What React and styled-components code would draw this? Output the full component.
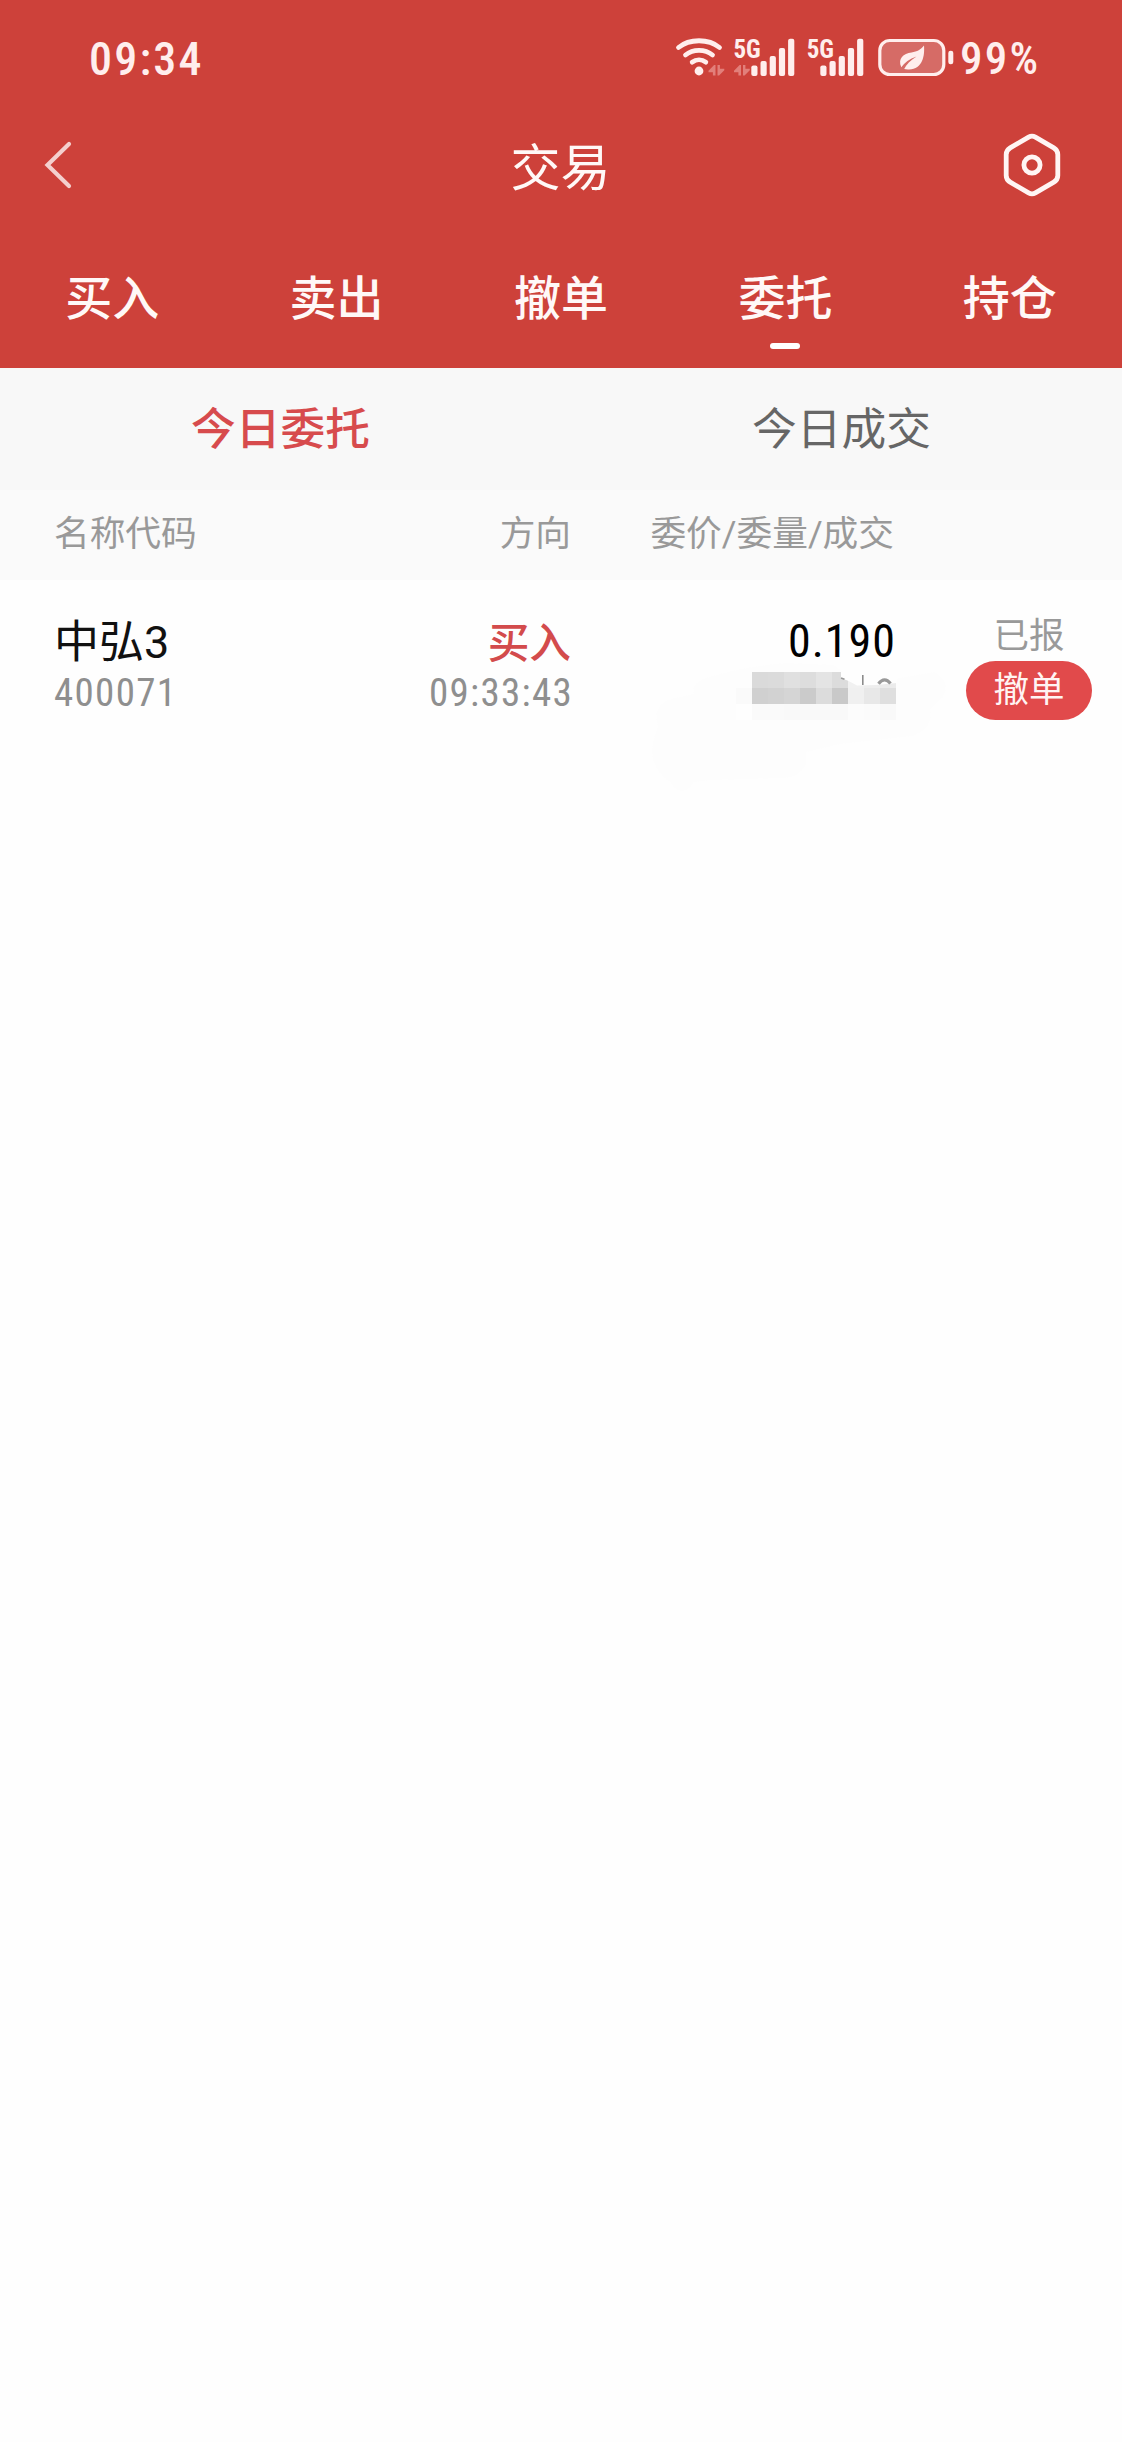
import React from 'react'
import styled, { createGlobalStyle } from 'styled-components'

const tabs = ['买入', '卖出', '撤单', '委托', '持仓']
const bars = [10.5, 15, 20, 28, 37.3]

// 16px blocks covering the order amount, one array per row
const mosaic = [
  ['#fdfdfd', '#dadada', '#dbdbdb', '#e0e0e0', '#dddddd', '#e4e4e4', '#dcdcdc', '#f1f1f1', '#eeeeee', '#ebebeb'],
  ['#fafafa', '#d0d0d0', '#d2d2d2', '#d5d5d5', '#cbcbcb', '#dcdcdc', '#c9c9c9', '#f0f0f0', '#e8e8e8', '#dfdfdf'],
  ['#fefefe', '#fafafa', '#fafafa', '#f9f9f9', '#f9f9f9', '#f9f9f9', '#f9f9f9', '#fcfcfc', '#fbfbfb', '#f9f9f9'],
]

const Transfer = ({ x, y }) => (
  <path
    transform={`translate(${x} ${y})`}
    d="M7 0V10.5H4.4V7.2H0V5.8L5.6 0ZM9 0V10.5H10.6L15.8 5.2V3.8H11.4V0Z"
    fill="#e27f7a"
  />
)

const WifiIcon = () => (
  <svg width="57" height="42" viewBox="0 0 57 42" fill="none" stroke="#ffeeed" strokeWidth="4.8" strokeLinecap="round">
    <path d="M4.5 11.5C15.5 2.5 34.5 2.5 45.5 11.5" />
    <path d="M11.5 19C19 12.8 31 12.8 38.5 19" />
    <path d="M18.2 26.2C22.2 23 27.8 23 31.8 26.2" />
    <circle cx="25" cy="35" r="4.4" fill="#ffeeed" stroke="none" />
    <g stroke="none"><Transfer x={34.5} y={29} /></g>
  </svg>
)

const SignalIcon = ({ start, transfer }) => (
  <SignalBox>
    <Network>5G</Network>
    <svg width={start + 44} height="42" viewBox={`0 0 ${start + 44} 42`} fill="#ffeeed">
      {transfer && <Transfer x={3} y={29} />}
      {bars.map((height, index) => (
        <rect key={height} x={start + index * 9.2} y={40 - height} width="6.2" height={height} rx="2" />
      ))}
    </svg>
  </SignalBox>
)

const BatteryIcon = () => (
  <svg width="78" height="42" viewBox="0 0 78 42">
    <rect x="2.8" y="4.5" width="64" height="34" rx="10" fill="#d66b66" stroke="#ffeeed" strokeWidth="3.2" />
    <rect x="71.3" y="14.7" width="5" height="13.6" rx="2.3" fill="#ffeeed" />
    <path d="M47 9.5C47.8 19.5 46 33 32 33.5C30 33.6 28.5 33.4 27.2 33.1C29.2 28.5 33.5 24.5 39.5 20.5C32.5 23 27.5 26.5 24.3 31.3C20.5 22 26.5 17.6 34.5 16.4C40.5 15.5 43.5 13.7 47 9.5Z" fill="#ffeeed" />
  </svg>
)

const MaskedAmount = () => (
  <Masked width="300" height="140" viewBox="0 0 300 140">
    <path d="M2 90Q4 76 8 66Q0 42 30 37L44 34Q40 22 60 17Q90 7 136 3L184 5L210 25Q250 18 285 12Q302 24 292 38L280 50Q284 68 262 76L190 84L156 92L156 104Q150 118 130 118L60 120L44 122Q32 140 20 122Q2 110 2 90Z" fill="#fdfdfd" />
    {mosaic.map((row, y) => row.map((color, x) => (
      <rect key={`${x}-${y}`} x={86 + x * 16} y={12 + y * 16} width="16" height="16" fill={color} shapeRendering="crispEdges" />
    )))}
    <path d="M191 12H247V23Q225 25.5 207 25.5Q200 21 191 18Z" fill="#fefefe" />
    <path d="M191 18L194.5 19.2" stroke="#999" strokeWidth="1.5" />
    <path d="M212.8 15V25" stroke="#8c8c8c" strokeWidth="1.6" />
    <path d="M228.5 23.8Q234.5 16 240.5 23.5" stroke="#999" strokeWidth="3.2" fill="none" />
  </Masked>
)

const App = () => (
  <Page>
    <GlobalStyle />
    <Header>
      <StatusBar>
        <Clock>09:34</Clock>
        <StatusIcons>
          <WifiIcon />
          <SignalIcon start={20.3} transfer />
          <SignalIcon start={15.3} />
          <BatteryIcon />
          <Percent>99%</Percent>
        </StatusIcons>
      </StatusBar>
      <NavBar>
        <svg width="30" height="50" viewBox="0 0 30 50" fill="none" stroke="#f4cfcd" strokeWidth="4.2" strokeLinecap="round">
          <path d="M26 4L4.5 25L26 46" />
        </svg>
        <Title>交易</Title>
        <svg width="60" height="66" viewBox="0 0 60 66" fill="none" stroke="#fff5f4" strokeWidth="4.8">
          <path d="M26.6 5.1Q30 3.1 33.4 5.1L51.8 15.9Q55.8 18.3 55.8 22.6V43.4Q55.8 47.7 51.8 50.1L33.4 60.9Q30 62.9 26.6 60.9L8.2 50.1Q4.2 47.7 4.2 43.4V22.6Q4.2 18.3 8.2 15.9Z" />
          <circle cx="30" cy="33" r="8.1" />
        </svg>
      </NavBar>
      <Tabs>
        {tabs.map(tab => (
          <Tab key={tab} $active={tab === '委托'}>{tab}</Tab>
        ))}
      </Tabs>
    </Header>
    <SubTabs>
      <SubTab $active>今日委托</SubTab>
      <SubTab>今日成交</SubTab>
    </SubTabs>
    <TableHead>
      <span>名称代码</span>
      <Right>方向</Right>
      <Right>委价/委量/成交</Right>
    </TableHead>
    <Order>
      <Cell>
        <Name>中弘3</Name>
        <Detail>400071</Detail>
      </Cell>
      <Cell $right>
        <Side>买入</Side>
        <Detail>09:33:43</Detail>
      </Cell>
      <Cell $right>
        <Price>0.190</Price>
        <MaskedAmount />
      </Cell>
      <State>
        <StateLabel>已报</StateLabel>
        <CancelButton>撤单</CancelButton>
      </State>
    </Order>
  </Page>
)

export default App

const GlobalStyle = createGlobalStyle`
  body {
    margin: 0;
    background: #fefefe;
    font-family: Roboto, 'Noto Sans CJK SC', sans-serif;
  }
  svg {
    display: block;
    flex: none;
  }
`

const Page = styled.div`
  min-height: 2442px;
  overflow: hidden;
`

const Header = styled.div`
  height: 368px;
  background: #cd413a;
`

const StatusBar = styled.div`
  display: flex;
  justify-content: space-between;
  height: 116px;
  box-sizing: border-box;
  padding: 36px 83px 0 89px;
  color: #ffeeed;
`

const Clock = styled.div`
  font-size: 46px;
  line-height: 46px;
  font-weight: 500;
  font-stretch: 85%;
  letter-spacing: 2.2px;
`

const StatusIcons = styled.div`
  display: flex;
  align-items: flex-start;
`

const SignalBox = styled.div`
  position: relative;
  margin-right: 9px;
  &:nth-of-type(2) {
    margin-right: 13px;
  }
`

const Network = styled.div`
  position: absolute;
  top: 1px;
  left: 2px;
  font-size: 25px;
  line-height: 26px;
  font-weight: 700;
  font-stretch: 85%;
`

const Percent = styled.div`
  width: 79px;
  margin-left: 5px;
  font-size: 45px;
  line-height: 46px;
  font-weight: 500;
  font-stretch: 85%;
  letter-spacing: 2.2px;
  white-space: nowrap;
`

const NavBar = styled.div`
  display: flex;
  align-items: center;
  justify-content: space-between;
  height: 98px;
  padding: 0 60px 0 43px;
`

const Title = styled.div`
  flex: 1;
  padding-left: 46px;
  font-size: 50px;
  line-height: 60px;
  margin-top: 8px;
  text-align: center;
  color: #fff8f7;
`

const Tabs = styled.div`
  display: grid;
  grid-template-columns: repeat(5, 1fr);
  height: 154px;
`

const Tab = styled.div`
  display: flex;
  flex-direction: column;
  align-items: center;
  padding-top: 55px;
  font-size: 47px;
  line-height: 60px;
  font-weight: 500;
  color: #fff8f7;
  &::after {
    content: '';
    width: 30px;
    height: 6px;
    margin-top: 14px;
    border-radius: 3px;
    background: ${props => props.$active ? '#fff' : 'transparent'};
  }
`

const SubTabs = styled.div`
  display: grid;
  grid-template-columns: 1fr 1fr;
  height: 122px;
  background: #f8f8f8;
`

const SubTab = styled.div`
  padding-top: 32px;
  text-align: center;
  font-size: 44.7px;
  line-height: 60px;
  font-weight: ${props => props.$active ? 500 : 400};
  color: ${props => props.$active ? '#d74b4d' : '#666'};
`

const columns = '248px 269px 323px 228px'

const TableHead = styled.div`
  display: grid;
  grid-template-columns: ${columns};
  align-items: center;
  height: 90px;
  box-sizing: border-box;
  padding: 0 0 2px 54px;
  background: #fafafa;
  font-size: 35.7px;
  line-height: 50px;
  color: #999;
`

const Right = styled.span`
  text-align: right;
`

const Order = styled.div`
  display: grid;
  grid-template-columns: ${columns};
  padding: 35px 0 0 54px;
`

const Cell = styled.div`
  position: relative;
  text-align: ${props => props.$right ? 'right' : 'left'};
`

const Name = styled.div`
  padding-top: 2px;
  margin-bottom: -2px;
  font-size: 45px;
  line-height: 52px;
  color: #111;
`

const Side = styled.div`
  padding-top: 1px;
  margin-bottom: -5px;
  font-size: 41.7px;
  line-height: 56px;
  font-weight: 500;
  color: #d34b4c;
`

const Price = styled.div`
  margin-right: -2px;
  font-size: 46px;
  line-height: 52px;
  font-stretch: 85%;
  letter-spacing: 1px;
  color: #000;
`

const Detail = styled.div`
  margin-right: -2px;
  font-size: 39px;
  line-height: 52px;
  font-stretch: 85%;
  letter-spacing: 1.3px;
  color: #8f8f8f;
`

// smudge spreads past the cell on both sides
const Masked = styled.svg`
  position: absolute;
  top: 45px;
  right: -56px;
`

const State = styled.div`
  display: flex;
  flex-direction: column;
  align-items: center;
  margin: 0 30px 0 72px;
`

const StateLabel = styled.div`
  height: 46px;
  font-size: 35.5px;
  line-height: 43px;
  color: #999;
`

const CancelButton = styled.div`
  width: 126px;
  height: 59px;
  border-radius: 30px;
  background: #e14a4b;
  font-size: 35.5px;
  line-height: 58px;
  text-align: center;
  color: #fff4f3;
`
